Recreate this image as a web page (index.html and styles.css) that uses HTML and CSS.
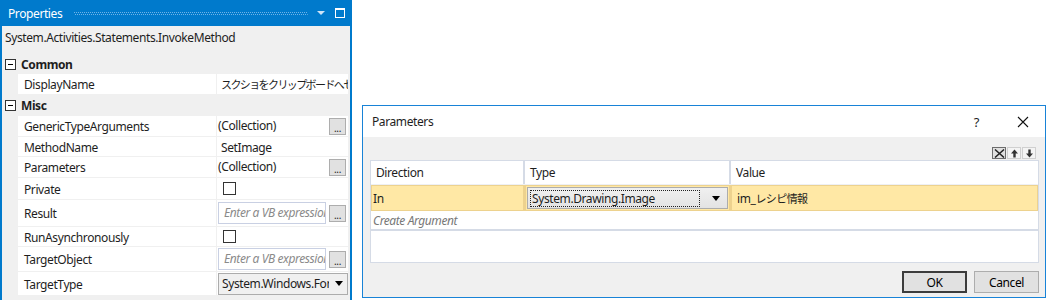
FILE: index.html
```html
<!DOCTYPE html>
<html lang="ja">
<head>
    <meta charset="UTF-8">
    <title>Properties - InvokeMethod</title>
    <link rel="stylesheet" href="styles.css">
</head>
<body>
    <div class="screen">
        <section class="props">
            <header class="props-title">
                <span class="props-title-text">Properties</span>
                <svg class="props-grip" height="4">
                    <defs>
                        <pattern id="grip" width="2" height="4" patternUnits="userSpaceOnUse">
                            <rect x="0" y="0" width="1" height="1" fill="#6fb3e8"/>
                            <rect x="1" y="2" width="1" height="1" fill="#6fb3e8"/>
                        </pattern>
                    </defs>
                    <rect width="100%" height="4" fill="url(#grip)"/>
                </svg>
                <svg class="title-icon" width="10" height="6" viewBox="0 0 10 6"><path d="M1 1h8L5 5z" fill="#cfe4f7"/></svg>
                <svg class="title-icon" width="12" height="12" viewBox="0 0 12 12"><rect x="1.5" y="1.5" width="9" height="9" fill="none" stroke="#fff"/><rect x="1" y="1" width="10" height="2" fill="#fff"/></svg>
            </header>
            <div class="type-name">System.Activities.Statements.InvokeMethod</div>

            <div class="category">
                <svg class="toggle" width="11" height="11" viewBox="0 0 11 11"><rect x="0.5" y="0.5" width="10" height="10" fill="#fff" stroke="#333"/><path d="M3 5.5h5" stroke="#000"/></svg>
                Common
            </div>
            <div class="prop-row">
                <div class="prop-name">DisplayName</div>
                <div class="prop-value"><span class="jp-name">スクショをクリップボードへセット</span></div>
            </div>

            <div class="category category-misc">
                <svg class="toggle" width="11" height="11" viewBox="0 0 11 11"><rect x="0.5" y="0.5" width="10" height="10" fill="#fff" stroke="#333"/><path d="M3 5.5h5" stroke="#000"/></svg>
                Misc
            </div>
            <div class="prop-row">
                <div class="prop-name">GenericTypeArguments</div>
                <div class="prop-value"><span class="value-text">(Collection)</span><span class="dots-btn">...</span></div>
            </div>
            <div class="prop-row row-short">
                <div class="prop-name">MethodName</div>
                <div class="prop-value"><span class="value-text indent">SetImage</span></div>
            </div>
            <div class="prop-row">
                <div class="prop-name">Parameters</div>
                <div class="prop-value"><span class="value-text">(Collection)</span><span class="dots-btn">...</span></div>
            </div>
            <div class="prop-row row-check">
                <div class="prop-name">Private</div>
                <div class="prop-value"><span class="check"></span></div>
            </div>
            <div class="prop-row row-tall">
                <div class="prop-name">Result</div>
                <div class="prop-value"><span class="expr"><span class="expr-text">Enter a VB expression</span></span><span class="dots-btn">...</span></div>
            </div>
            <div class="prop-row row-short">
                <div class="prop-name">RunAsynchronously</div>
                <div class="prop-value"><span class="check"></span></div>
            </div>
            <div class="prop-row row-mid">
                <div class="prop-name">TargetObject</div>
                <div class="prop-value"><span class="expr"><span class="expr-text">Enter a VB expression</span></span><span class="dots-btn">...</span></div>
            </div>
            <div class="prop-row row-combo">
                <div class="prop-name">TargetType</div>
                <div class="prop-value">
                    <div class="prop-combo">
                        <span class="prop-combo-text">System.Windows.Forms.Clipboard</span>
                        <svg width="8" height="5" viewBox="0 0 8 5"><path d="M0 0h8L4 5z" fill="#000"/></svg>
                    </div>
                </div>
            </div>
        </section>

        <section class="dialog">
            <header class="dialog-title">
                <span class="dialog-title-text">Parameters</span>
                <span class="help">?</span>
                <svg class="close" width="12" height="12" viewBox="0 0 12 12"><path d="M1 1l10 10M11 1L1 11" stroke="#111" stroke-width="1.1"/></svg>
            </header>
            <div class="dialog-body">
                <div class="grid-tools">
                    <span class="tool tool-active">
                        <svg width="11" height="9" viewBox="0 0 11 9"><path d="M1 0.5l9 8M10 0.5l-9 8" stroke="#222" stroke-width="1.5"/></svg>
                    </span>
                    <span class="tool">
                        <svg width="9" height="9" viewBox="0 0 9 9"><path d="M4.5 0.5L1 4.5h2.3v4h2.4v-4H8z" fill="#333"/></svg>
                    </span>
                    <span class="tool">
                        <svg width="9" height="9" viewBox="0 0 9 9"><path d="M4.5 8.5L1 4.5h2.3v-4h2.4v4H8z" fill="#333"/></svg>
                    </span>
                </div>
                <div class="arg-grid">
                    <div class="arg-head">
                        <div class="cell">Direction</div>
                        <div class="cell">Type</div>
                        <div class="cell">Value</div>
                    </div>
                    <div class="arg-row">
                        <div class="cell">In</div>
                        <div class="cell cell-combo">
                            <div class="type-combo">
                                <span class="type-combo-text">System.Drawing.Image</span>
                                <svg width="8" height="5" viewBox="0 0 8 5"><path d="M0 0h8L4 5z" fill="#000"/></svg>
                            </div>
                        </div>
                        <div class="cell cell-value">im_<span class="jp-value">レシピ情報</span></div>
                    </div>
                    <div class="arg-create">Create Argument</div>
                    <div class="arg-empty"></div>
                </div>
                <div class="dialog-buttons">
                    <button class="btn btn-default">OK</button>
                    <button class="btn">Cancel</button>
                </div>
            </div>
        </section>
    </div>
</body>
</html>
```

FILE: styles.css
```css
body {
    margin: 0;
    background: #fff;
    font-family: "Noto Sans", "Noto Sans CJK JP", sans-serif;
    font-size: 12px;
    letter-spacing: -0.4px;
    color: #1e1e1e;
}
.screen {
    display: flex;
    align-items: flex-start;
    width: 1048px;
    height: 300px;
    overflow: hidden;
}

/* properties panel */
.props {
    width: 348px;
    height: 300px;
    background: #f0f0f0;
    border-left: 2px solid #007acc;
    border-right: 2px solid #007acc;
    overflow: hidden;
}
.props-title {
    height: 26px;
    background: #007acc;
    display: flex;
    align-items: center;
    padding: 0 4px 0 6px;
    gap: 8px;
    color: #fff;
}
.props-grip {
    flex: 1;
    margin: 2px 0 0 4px;
    display: block;
}
.title-icon {
    display: block;
}
.type-name {
    height: 25px;
    padding: 3px 3px 0;
    line-height: 18px;
}
.category {
    height: 20px;
    display: flex;
    align-items: center;
    gap: 5px;
    padding-left: 3px;
    font-weight: bold;
}
.category-misc {
    height: 21px;
}
.toggle {
    display: block;
}
.prop-row {
    display: grid;
    grid-template-columns: 199px 1fr;
    height: 20px;
    margin: 0 2px 1px 16px;
    background: #fff;
}
.row-short { height: 19px; }
.row-check { height: 21px; }
.row-tall { height: 26px; }
.row-mid { height: 24px; }
.row-combo { height: 23px; }
.prop-name {
    display: flex;
    align-items: center;
    padding: 1px 0 0 6px;
    border-right: 1px solid #f0f0f0;
}
.prop-value {
    display: flex;
    align-items: center;
    white-space: nowrap;
    overflow: hidden;
    padding-left: 1px;
    gap: 3px;
}
.jp-name {
    padding-left: 3px;
    font-size: 11px;
    letter-spacing: -1.6px;
}
.value-text {
    flex: 1;
    margin-top: -2px;
}
.value-text.indent {
    padding-left: 3px;
    margin-top: 1px;
}
.dots-btn {
    width: 17px;
    height: 17px;
    margin-right: 2px;
    border: 1px solid #adadad;
    background: #e1e1e1;
    font-size: 10px;
    line-height: 18px;
    text-align: center;
    box-sizing: border-box;
    flex: none;
}
.check {
    width: 13px;
    height: 13px;
    margin-left: 5px;
    border: 1px solid #333;
    background: #fff;
    box-sizing: border-box;
}
.expr {
    flex: 1;
    min-width: 0;
    height: 22px;
    border: 1px solid #c9d0e3;
    box-sizing: border-box;
    padding-left: 5px;
    line-height: 20px;
    overflow: hidden;
}
.expr-text {
    color: #8a8a8a;
    font-style: italic;
}
.prop-combo {
    flex: 1;
    height: 22px;
    display: flex;
    align-items: center;
    gap: 6px;
    border: 1px solid #acacac;
    background: #f0f0f0;
    box-sizing: border-box;
    padding: 0 4px 0 3px;
    overflow: hidden;
}
.prop-combo-text {
    flex: 1;
    overflow: hidden;
}

/* parameters dialog */
.dialog {
    width: 682px;
    height: 191px;
    margin: 105px 0 0 10px;
    border: 1px solid #1883d7;
    background: #f0f0f0;
}
.dialog-title {
    height: 31px;
    background: #fff;
    display: flex;
    align-items: center;
    padding: 0 16px 0 9px;
}
.dialog-title-text {
    flex: 1;
}
.help {
    font-size: 13px;
    margin-right: 38px;
}
.close {
    display: block;
}
.dialog-body {
    padding: 0 6px 0 7px;
}
.grid-tools {
    height: 22px;
    display: flex;
    justify-content: flex-end;
    align-items: flex-end;
    padding: 0 3px 1px 0;
    gap: 1px;
}
.tool {
    width: 12px;
    height: 10px;
    display: flex;
    align-items: center;
    justify-content: center;
    border: 1px solid #d0d0d0;
    background: #f4f4f4;
}
.tool-active {
    border-color: #6d6d6d;
    background: #e0e0e0;
}
.arg-grid {
    height: 101px;
    border: 1px solid #d5dbe6;
    background: #fff;
}
.arg-head,
.arg-row {
    display: grid;
    grid-template-columns: 154px 206px 1fr;
}
.arg-head {
    height: 23px;
    border-bottom: 1px solid #eef0f4;
}
.arg-head .cell {
    display: flex;
    align-items: center;
    padding-left: 5px;
    border-right: 2px solid #d5dbe6;
}
.arg-head .cell:last-child {
    border-right: 0;
}
.arg-row {
    height: 26px;
    background: #ffe8a5;
    border-bottom: 1px solid #fff;
}
.arg-row .cell {
    display: flex;
    align-items: center;
    padding-left: 1px;
    border: 1px solid #edd28e;
    border-right-width: 2px;
    white-space: nowrap;
}
.arg-row .cell-combo {
    padding: 1px;
}
.arg-row .cell-value {
    padding-left: 5px;
    border-right-width: 1px;
}
.jp-value {
    font-size: 11px;
    letter-spacing: -0.6px;
}
.type-combo {
    flex: 1;
    height: 20px;
    display: flex;
    align-items: center;
    border: 1px solid #acacac;
    background: linear-gradient(#f0f0f0, #e3e3e3);
    padding: 0 7px 0 2px;
    gap: 12px;
}
.type-combo-text {
    flex: 1;
    height: 15px;
    line-height: 15px;
    padding-left: 1px;
    border: 1px dotted #222;
}
.arg-create {
    height: 17px;
    line-height: 17px;
    padding-left: 2px;
    color: #777;
    font-style: italic;
    border-bottom: 2px solid #d5dbe6;
}
.dialog-buttons {
    display: flex;
    justify-content: flex-end;
    gap: 7px;
    padding-top: 8px;
}
.btn {
    width: 65px;
    height: 22px;
    border: 1px solid #adadad;
    background: #e1e1e1;
    font-family: inherit;
    font-size: 12px;
    letter-spacing: inherit;
    color: #000;
    padding: 0;
}
.btn-default {
    border: 2px solid #3c3c3c;
}
```
